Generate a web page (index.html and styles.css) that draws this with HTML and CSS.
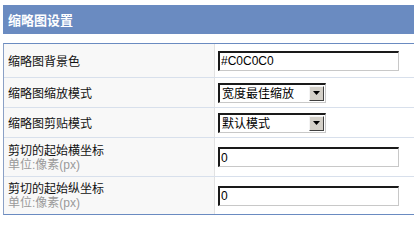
FILE: index.html
```html
<!DOCTYPE html>
<html lang="zh-CN">
<head>
<meta charset="utf-8">
<title>缩略图设置</title>
<link rel="stylesheet" href="styles.css">
</head>
<body>
<div class="panel">
  <div class="panel-title">缩略图设置</div>
  <div class="form">
    <div class="row row-1">
      <div class="label"><span class="name">缩略图背景色</span></div>
      <div class="value"><input class="text" type="text" value="#C0C0C0"></div>
    </div>
    <div class="row row-2">
      <div class="label"><span class="name">缩略图缩放模式</span></div>
      <div class="value">
        <div class="select">
          <span class="select-text">宽度最佳缩放</span>
          <span class="select-btn"><svg width="7" height="4" viewBox="0 0 7 4"><path d="M0 0h7L3.5 4z" fill="#000"/></svg></span>
        </div>
      </div>
    </div>
    <div class="row row-3">
      <div class="label"><span class="name">缩略图剪贴模式</span></div>
      <div class="value">
        <div class="select">
          <span class="select-text">默认模式</span>
          <span class="select-btn"><svg width="7" height="4" viewBox="0 0 7 4"><path d="M0 0h7L3.5 4z" fill="#000"/></svg></span>
        </div>
      </div>
    </div>
    <div class="row row-4">
      <div class="label"><span class="name">剪切的起始横坐标</span><span class="hint">单位:像素(px)</span></div>
      <div class="value"><input class="text" type="text" value="0"></div>
    </div>
    <div class="row row-5">
      <div class="label"><span class="name">剪切的起始纵坐标</span><span class="hint">单位:像素(px)</span></div>
      <div class="value"><input class="text" type="text" value="0"></div>
    </div>
  </div>
</div>
</body>
</html>
```

FILE: styles.css
```css
html, body {
  margin: 0;
  padding: 0;
  background: #ffffff;
}
body {
  font-family: "Noto Sans CJK SC", "Liberation Sans", sans-serif;
  font-size: 12px;
  color: #111;
}
.panel {
  padding: 5px 0 0 3px;
}
.panel-title {
  height: 29px;
  line-height: 29px;
  background: #6a8bc1;
  color: #ffffff;
  font-weight: bold;
  font-size: 13px;
  padding-left: 5px;
}
.form {
  margin-top: 9px;
  border-top: 1px solid #6a8bc1;
  border-bottom: 1px solid #6a8bc1;
  border-left: 1px solid #8aa0c6;
}
.row {
  display: grid;
  grid-template-columns: 211px 1fr;
  border-bottom: 1px solid #d8e0ec;
}
.row:last-child { border-bottom: none; }
.row-1 { height: 33px; }
.row-2, .row-3 { height: 29px; }
.row-4 { height: 38px; }
.row-5 { height: 37px; }
.label {
  background: #f8f8f8;
  border-right: 1px solid #e2e2e2;
  padding-left: 4px;
  display: flex;
  flex-direction: column;
  justify-content: center;
}
.name {
  color: #111;
  line-height: 16px;
}
.hint {
  color: #9a9a9a;
  line-height: 15px;
  font-family: "Liberation Sans", "Noto Sans CJK SC", sans-serif;
}
.value {
  display: flex;
  align-items: center;
  padding-left: 3px;
}
.text {
  box-sizing: border-box;
  width: 181px;
  height: 20px;
  margin: 0;
  padding: 0 0 0 1px;
  border-style: solid;
  border-width: 2px 1px 1px 2px;
  border-color: #1a1a1a #c8c8c8 #c8c8c8 #1a1a1a;
  font-family: "Liberation Sans", sans-serif;
  font-size: 12px;
  color: #000;
  background: #fff;
  outline: none;
}
.select {
  box-sizing: border-box;
  width: 108px;
  height: 20px;
  display: flex;
  align-items: center;
  border-style: solid;
  border-width: 2px 1px 1px 2px;
  border-color: #1a1a1a #c8c8c8 #c8c8c8 #1a1a1a;
  background: #fff;
}
.select-text {
  flex: 1;
  padding-left: 2px;
  color: #000;
  line-height: 16px;
}
.select-btn {
  box-sizing: border-box;
  width: 15px;
  height: 15px;
  margin-right: 1px;
  background: #d4d0c8;
  border-style: solid;
  border-width: 1px;
  border-color: #f4f4f4 #404040 #404040 #f4f4f4;
  display: flex;
  align-items: center;
  justify-content: center;
}
.select-btn svg { display: block; }
```
